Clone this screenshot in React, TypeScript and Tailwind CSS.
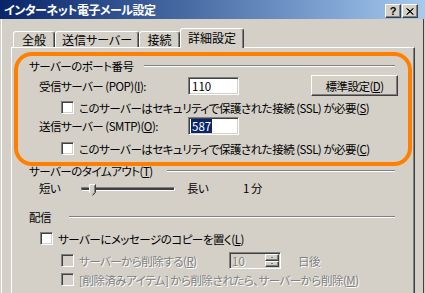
import React from 'react';

const sunken =
  'border border-t-[#808080] border-l-[#808080] border-b-white border-r-white shadow-[inset_1px_1px_0_#404040,inset_-1px_-1px_0_#d4d0c8]';
const raised =
  'border border-t-white border-l-white border-b-[#404040] border-r-[#404040] shadow-[inset_-1px_-1px_0_#808080]';

function Check({ disabled = false }: { disabled?: boolean }) {
  return (
    <span
      className={`block w-[13px] h-[13px] shrink-0 ${sunken} ${disabled ? 'bg-[#d4d0c8]' : 'bg-white'}`}
    />
  );
}

function Etched() {
  return <div className="flex-1 h-[2px] border-t border-t-[#808080] border-b border-b-white" />;
}

function U({ children }: { children: React.ReactNode }) {
  return <span className="underline underline-offset-[1px]">{children}</span>;
}

function Tab({ label, className }: { label: string; className: string }) {
  return (
    <div
      className={`flex items-center justify-center border-l border-t border-l-white border-t-white border-r border-r-[#404040] shadow-[inset_-1px_0_0_#808080] rounded-t-[3px] ${className}`}
    >
      {label}
    </div>
  );
}

export default function App() {
  return (
    <div className="w-[425px] h-[293px] overflow-hidden bg-[#d4d0c8] text-black text-[12px] leading-[14px] font-['Noto_Sans_CJK_JP','Noto_Sans',sans-serif] [font-feature-settings:'palt']">
      {/* Title bar */}
      <div className="h-[19px] flex items-center pl-[4px] pr-[7px] bg-linear-to-r from-[#0a246a] to-[#a6caf0]">
        <span className="flex-1 text-white font-bold text-[12px] leading-[14px] tracking-[-0.5px] pt-[1px]">
          インターネット電子メール設定
        </span>
        <div className="flex gap-[1px] pt-[3px]">
          <div className={`w-[16px] h-[14px] bg-[#d4d0c8] flex items-center justify-center ${raised}`}>
            <span className="font-['Liberation_Sans',sans-serif] font-bold text-[11px] leading-[11px]">?</span>
          </div>
          <div className={`w-[16px] h-[14px] bg-[#d4d0c8] flex items-center justify-center ${raised}`}>
            <svg width="8" height="7" viewBox="0 0 8 7">
              <path d="M0.5 0.5 L7 6.5 M1.5 0.5 L7.5 6.5 M7 0.5 L0.5 6.5 M7.5 0.5 L1 6.5" stroke="#000" strokeWidth="1" fill="none" />
            </svg>
          </div>
        </div>
      </div>

      {/* Window body */}
      <div className="relative h-[274px] pl-[10px] pt-[9px] border-l border-l-white ml-[1px] mr-[1px] border-r border-r-[#404040]">
        {/* Tabs */}
        <div className="relative z-10 flex items-end h-[19px] pl-[2px] -ml-[1px]">
          <Tab label="全般" className="w-[42px] h-[16px]" />
          <Tab label="送信サーバー" className="w-[84px] h-[16px]" />
          <Tab label="接続" className="w-[41px] h-[16px]" />
          <Tab label="詳細設定" className="w-[64px] h-[20px] -mb-[1px] bg-[#d4d0c8] pb-[2px]" />
        </div>

        {/* Panel */}
        <div className="w-[404px] h-[260px] border-l border-t border-l-white border-t-white border-r border-r-[#404040] shadow-[inset_-1px_0_0_#808080] pl-[17px] pt-[11px] -ml-[1px] text-[11.5px] tracking-[-0.5px]">
          {/* Port numbers */}
          <div className="w-[366px] h-[14px] flex items-center">
            <span className="w-[115px] shrink-0">サーバーのポート番号</span>
            <Etched />
          </div>
          <div className="mt-[2px] h-[21px] flex items-center pl-[10px]">
            <span className="w-[149px] shrink-0">
              受信サーバー (POP)(<U>I</U>):
            </span>
            <div className={`w-[51px] h-[18px] bg-white pl-[3px] flex items-center tracking-normal ${sunken}`}>110</div>
            <button className={`ml-[72px] w-[87px] h-[21px] bg-[#d4d0c8] flex items-center justify-center ${raised}`}>
              標準設定(<U>D</U>)
            </button>
          </div>
          <div className="mt-[5px] h-[13px] flex items-center gap-[5px] pl-[32px]">
            <Check />
            <span>
              このサーバーはセキュリティで保護された接続 (SSL) が必要(<U>S</U>)
            </span>
          </div>
          <div className="mt-[3px] h-[18px] flex items-center pl-[10px]">
            <span className="w-[149px] shrink-0">
              送信サーバー (SMTP)(<U>O</U>):
            </span>
            <div className={`w-[51px] h-[18px] bg-white pl-[2px] flex items-center tracking-normal ${sunken}`}>
              <span className="bg-[#0a246a] text-white px-[1px]">587</span>
            </div>
          </div>
          <div className="mt-[7px] h-[13px] flex items-center gap-[5px] pl-[32px]">
            <Check />
            <span>
              このサーバーはセキュリティで保護された接続 (SSL) が必要(<U>C</U>)
            </span>
          </div>

          {/* Timeout */}
          <div className="mt-[9px] w-[366px] h-[14px] flex items-center">
            <span className="w-[138px] shrink-0">
              サーバーのタイムアウト(<U>T</U>)
            </span>
            <Etched />
          </div>
          <div className="mt-[2px] h-[16px] flex items-center pl-[10px]">
            <span className="w-[42px] shrink-0">短い</span>
            <div className="relative w-[94px] h-[16px]">
              <div className="absolute left-0 right-0 top-[7px] h-[4px] border-t border-l border-t-[#808080] border-l-[#808080] border-b border-r border-b-white border-r-white bg-[#404040]" />
              <svg className="absolute left-[8px] top-[4px]" width="7" height="12" viewBox="0 0 7 12">
                <path d="M0.5 0.5 H6.5 V8.5 L3.5 11.5 L0.5 8.5 Z" fill="#d4d0c8" />
                <path d="M0.5 8.5 V0.5 H6" stroke="#fff" fill="none" />
                <path d="M6.5 0.5 V8.5 L3.5 11.5" stroke="#404040" fill="none" />
                <path d="M5.5 1.5 V8.2 L3.5 10.3" stroke="#808080" fill="none" />
              </svg>
            </div>
            <span className="ml-[12px] w-[56px] shrink-0">長い</span>
            <span>1 分</span>
          </div>

          {/* Delivery */}
          <div className="mt-[14px] w-[366px] h-[14px] flex items-center">
            <span className="w-[40px] shrink-0">配信</span>
            <Etched />
          </div>
          <div className="mt-[8px] h-[13px] flex items-center gap-[5px] pl-[11px]">
            <Check />
            <span>
              サーバーにメッセージのコピーを置く(<U>L</U>)
            </span>
          </div>
          <div className="mt-[7px] h-[17px] flex items-center pl-[32px] text-[#808080] [text-shadow:1px_1px_0_#ffffff]">
            <div className="w-[168px] shrink-0 flex items-center gap-[5px]">
              <Check disabled />
              <span>
                サーバーから削除する(<U>R</U>)
              </span>
            </div>
            <div className={`w-[52px] h-[17px] bg-[#d4d0c8] flex items-center justify-between pl-[2px] pr-[1px] tracking-normal ${sunken}`}>
              <span>10</span>
              <div className="flex flex-col h-[13px] w-[14px]">
                <div className={`flex-1 bg-[#d4d0c8] flex items-center justify-center ${raised}`}>
                  <span className="w-[2px] h-[1px] bg-[#808080]" />
                </div>
                <div className={`flex-1 bg-[#d4d0c8] flex items-center justify-center ${raised}`}>
                  <span className="w-[2px] h-[1px] bg-[#808080]" />
                </div>
              </div>
            </div>
            <span className="ml-[17px]">日後</span>
          </div>
          <div className="mt-[4px] h-[13px] flex items-center gap-[5px] pl-[32px] text-[#808080] [text-shadow:1px_1px_0_#ffffff]">
            <Check disabled />
            <span>
              [削除済みアイテム] から削除されたら、サーバーから削除(<U>M</U>)
            </span>
          </div>
        </div>

        {/* Orange highlight annotation */}
        <div className="absolute left-[12px] top-[33px] w-[398px] h-[114px] border-[4px] border-[#ff8000] rounded-[18px] pointer-events-none" />
      </div>
    </div>
  );
}
